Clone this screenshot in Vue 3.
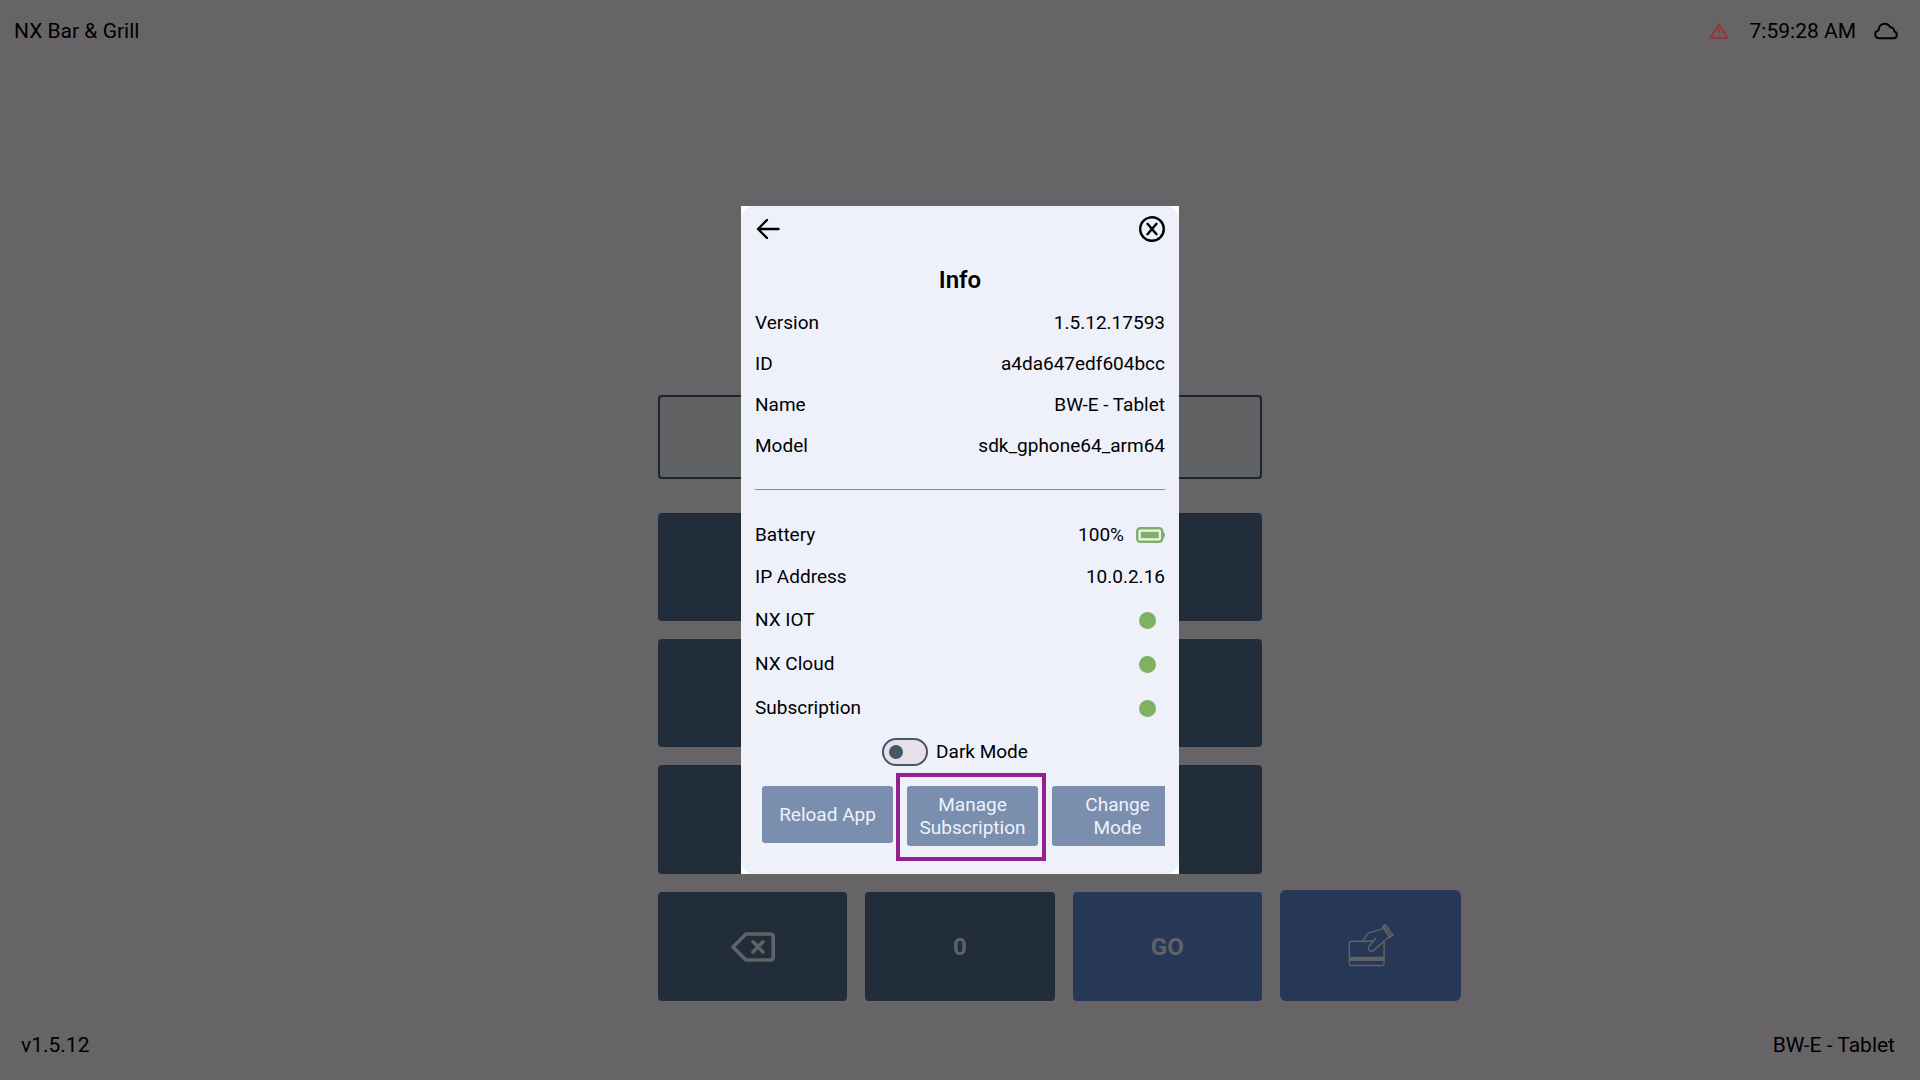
<template>
  <div class="page">
    <!-- Top status bar -->
    <header class="status-bar">
      <span>NX Bar &amp; Grill</span>
      <div class="status-right">
        <svg class="warn-icon" viewBox="0 0 20 18" width="20" height="18" fill="none" stroke="currentColor" stroke-width="2" stroke-linejoin="round">
          <path d="M10 2 L18.4 16 H1.6 Z" />
          <path d="M10 6.5 V11 M10 12.4 V14.2" stroke-width="1.8" />
        </svg>
        <span class="clock">7:59:28 AM</span>
        <svg viewBox="0 0 24 18" width="24" height="18" fill="none" stroke="currentColor" stroke-width="2" stroke-linejoin="round">
          <path d="M5.5 16.2 C2.9 16.2 1.2 14.6 1.2 12.2 C1.2 10.1 2.6 8.6 4.6 8.2 C4.8 4.3 7.4 1.8 10.8 1.8 C13.3 1.8 15.2 3.1 16.1 5.2 C18.6 5.2 20.3 6.9 20.2 9.3 C21.9 9.9 22.8 11.1 22.8 12.7 C22.8 14.8 21.3 16.2 19.2 16.2 Z" />
        </svg>
      </div>
    </header>

    <!-- PIN pad -->
    <main class="login">
      <div class="keypad">
        <input class="pin-input" type="password" aria-label="PIN" />
        <div class="keys">
          <button v-for="n in 9" :key="n" class="key" :aria-label="String(n)"></button>
          <button class="key" aria-label="Backspace">
            <svg viewBox="0 0 44 30" width="44" height="30" fill="none" stroke="currentColor" stroke-width="3.6" stroke-linejoin="round" stroke-linecap="round">
              <path d="M15 2 H39.5 Q42.2 2 42.2 4.7 V25.3 Q42.2 28 39.5 28 H15 L2 15 Z" />
              <path d="M22 9.8 L32 20 M32 9.8 L22 20" />
            </svg>
          </button>
          <button class="key">0</button>
          <button class="key go">GO</button>
        </div>
      </div>
      <button class="card-key" aria-label="Swipe card">
        <svg viewBox="0 0 145 135" width="48" height="45" fill="none" stroke="currentColor" stroke-width="4.5" stroke-linejoin="round" stroke-linecap="round">
          <path d="M80 55 H14 Q7 55 7 62 V121 Q7 128 14 128 H105 Q112 128 112 121 V58" />
          <path d="M7 108 H112" stroke-width="13" stroke-linecap="butt" />
          <path d="M46 55 L64 30 L106 18" />
          <path d="M87 46 L67 70 Q62 78 68 83 Q75 88 83 80 L126 42" />
          <path d="M107 11 L116 5 L139 36 L129 43 Z M111 9 L134 40" />
        </svg>
      </button>
    </main>

    <footer class="bottom-bar">
      <span>v1.5.12</span>
      <span>BW-E - Tablet</span>
    </footer>

    <!-- Info dialog -->
    <div class="backdrop">
      <div class="dialog-frame">
        <section class="dialog" role="dialog" aria-labelledby="info-title">
          <div class="dialog-nav">
            <button class="icon-btn" aria-label="Back">
              <svg viewBox="0 0 26 26" width="26" height="26" fill="none" stroke="currentColor" stroke-width="2.4" stroke-linecap="round" stroke-linejoin="round">
                <path d="M23.5 13 H3 M12 4 L3 13 L12 22" />
              </svg>
            </button>
            <button class="icon-btn" aria-label="Close">
              <svg viewBox="0 0 26 26" width="26" height="26" fill="none" stroke="currentColor" stroke-width="2.4" stroke-linecap="round">
                <circle cx="13" cy="13" r="11.8" />
                <path d="M8.5 7.8 L17.5 18.2 M17.5 7.8 L8.5 18.2" />
              </svg>
            </button>
          </div>

          <h1 id="info-title" class="title">Info</h1>

          <dl class="rows">
            <div v-for="item in device" :key="item.label" class="row">
              <dt>{{ item.label }}</dt>
              <dd>{{ item.value }}</dd>
            </div>
          </dl>

          <hr class="divider" />

          <dl class="rows">
            <div class="row network">
              <dt>Battery</dt>
              <dd class="battery">
                100%
                <svg viewBox="0 0 29 16" width="29" height="16">
                  <rect x="1.2" y="1.2" width="25" height="13.6" rx="3" fill="none" stroke="currentColor" stroke-width="2.4" />
                  <rect x="4.8" y="4.8" width="18" height="6.4" fill="currentColor" />
                  <path d="M27 4.5 Q29 5 29 8 Q29 11 27 11.5 Z" fill="currentColor" />
                </svg>
              </dd>
            </div>
            <div class="row network">
              <dt>IP Address</dt>
              <dd>10.0.2.16</dd>
            </div>
            <div v-for="name in services" :key="name" class="row service">
              <dt>{{ name }}</dt>
              <dd class="dot" role="img" aria-label="Connected"></dd>
            </div>
          </dl>

          <div class="theme">
            <input id="dark-mode" v-model="darkMode" class="switch" type="checkbox" />
            <label for="dark-mode">Dark Mode</label>
          </div>

          <div class="actions">
            <button class="action">Reload App</button>
            <div class="highlight">
              <button class="action tall">Manage Subscription</button>
            </div>
            <button class="action tall">Change Mode</button>
          </div>
        </section>
      </div>
    </div>
  </div>
</template>

<script setup>
import { ref } from 'vue'

const darkMode = ref(false)

const device = [
  { label: 'Version', value: '1.5.12.17593' },
  { label: 'ID', value: 'a4da647edf604bcc' },
  { label: 'Name', value: 'BW-E - Tablet' },
  { label: 'Model', value: 'sdk_gphone64_arm64' }
]

const services = ['NX IOT', 'NX Cloud', 'Subscription']
</script>

<style>
body {
  margin: 0;
  background: #676467;
}
</style>

<style scoped>
* {
  box-sizing: border-box;
}
button,
input {
  font: inherit;
  color: inherit;
  margin: 0;
  padding: 0;
  border: none;
}
button {
  cursor: pointer;
}
svg {
  display: block;
}

.page {
  min-height: 100vh;
  display: flex;
  flex-direction: column;
  background: #676467;
  color: #000000;
  font-family: Roboto, "Liberation Sans", sans-serif;
  font-size: 21px;
  line-height: 24px;
}

/* Status bar */
.status-bar {
  display: flex;
  justify-content: space-between;
  align-items: center;
  height: 61px;
  padding: 0 22px 0 14px;
}
.status-right {
  display: flex;
  align-items: center;
}
.warn-icon {
  color: #963538;
}
.clock {
  margin: 0 18px 0 21px;
}

/* Keypad */
.login {
  flex: 1;
  display: grid;
  grid-template-columns: 1fr 604px 1fr;
  column-gap: 18px;
  align-items: end;
}
.keypad {
  grid-column: 2;
  display: flex;
  flex-direction: column;
  gap: 34px;
}
.pin-input {
  width: 100%;
  height: 84px;
  background: #606264;
  border: 2px solid #1d242d;
  border-radius: 4px;
  text-align: center;
}
.keys {
  display: grid;
  grid-template-columns: repeat(3, 1fr);
  grid-template-rows: repeat(2, 108px) repeat(2, 109px);
  gap: 18px;
}
.key,
.card-key {
  display: flex;
  align-items: center;
  justify-content: center;
  background: #222d3c;
  border-radius: 4px;
  color: #606264;
  font-size: 24px;
  font-weight: 700;
}
.key.go,
.card-key {
  background: #273857;
}
.card-key {
  width: 181px;
  height: 111px;
  border-radius: 6px;
}

.bottom-bar {
  display: flex;
  justify-content: space-between;
  align-items: center;
  height: 79px;
  padding: 8px 25px 0 21px;
}

/* Dialog */
.backdrop {
  position: fixed;
  inset: 0;
  display: flex;
  align-items: center;
  justify-content: center;
}
.dialog-frame {
  width: 438px;
  background: #ffffff;
}
.dialog {
  padding: 0 14px 13px;
  background: #eff1fa;
  border-radius: 14px;
  font-size: 19px;
}
.dialog-nav {
  display: flex;
  justify-content: space-between;
  align-items: center;
  height: 46px;
}
.icon-btn {
  background: none;
}
.title {
  margin: 0;
  padding: 14px 0 8px;
  font-size: 24px;
  font-weight: 600;
  line-height: 28px;
  text-align: center;
}
.rows {
  margin: 0;
}
.row {
  display: flex;
  justify-content: space-between;
  align-items: center;
  height: 41px;
}
.row dd {
  margin: 0;
}
.row.network {
  height: 42px;
}
.row.service {
  height: 44px;
}
.row .battery {
  display: flex;
  align-items: center;
  gap: 12px;
}
.battery svg {
  color: #80b163;
}
.row .dot {
  width: 17px;
  height: 17px;
  margin-right: 9px;
  border-radius: 50%;
  background: #80b163;
}
.divider {
  height: 1px;
  margin: 23px 0 24px;
  border: none;
  background: #808a9b;
}

/* Dark mode switch */
.theme {
  display: flex;
  align-items: center;
  justify-content: center;
  gap: 8px;
  height: 43px;
  padding-right: 10px;
}
.switch {
  appearance: none;
  display: flex;
  align-items: center;
  width: 46px;
  height: 28px;
  padding-left: 5px;
  border: 2px solid #48566a;
  border-radius: 14px;
  background: #e6e0e8;
  cursor: pointer;
}
.switch::before {
  content: "";
  width: 14px;
  height: 14px;
  border-radius: 50%;
  background: #48566a;
}
.switch:checked {
  justify-content: flex-end;
  padding: 0 5px 0 0;
}

/* Action buttons scroll sideways */
.actions {
  display: flex;
  align-items: flex-start;
  gap: 14px;
  padding: 13px 0 15px 7px;
  overflow: hidden;
}
.action {
  flex: none;
  width: 131px;
  height: 57px;
  background: #7a8fae;
  border-radius: 3px;
  color: #eff1fa;
  line-height: 23px;
}
.action.tall {
  height: 60px;
  padding: 0 10px;
}
.highlight {
  position: relative;
  display: flex;
}
.highlight::after {
  content: "";
  position: absolute;
  inset: -13px -8px -15px -11px;
  border: 4px solid #922092;
  pointer-events: none;
}
</style>
